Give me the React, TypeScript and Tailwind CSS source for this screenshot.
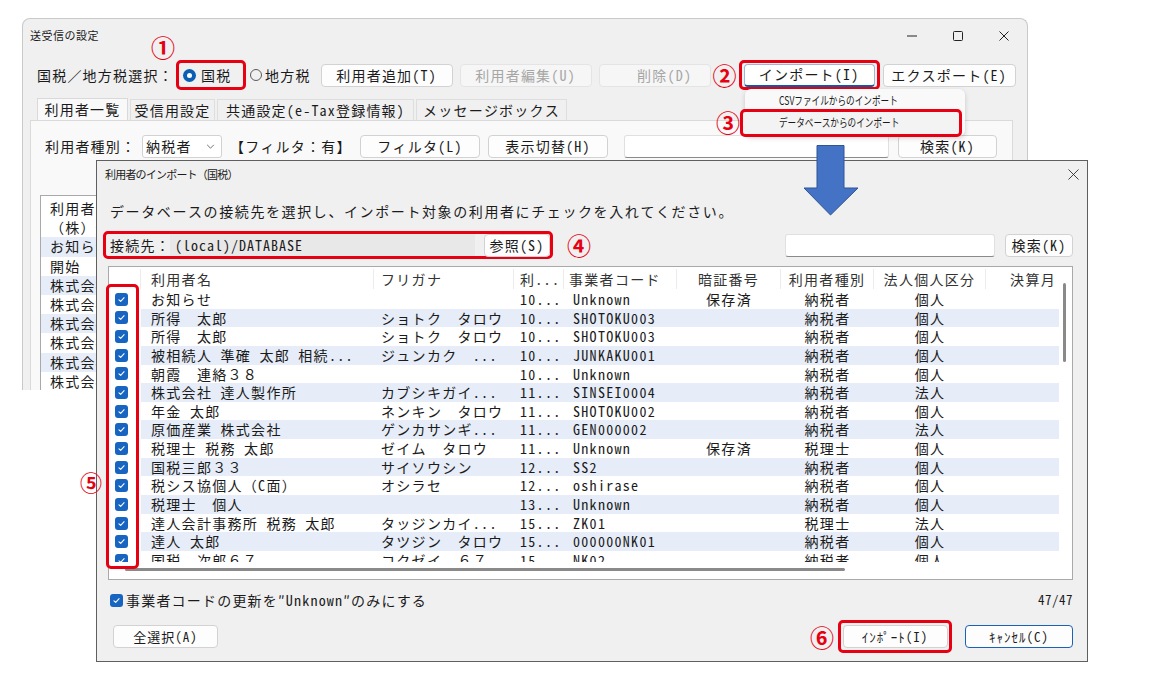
import React from 'react'

const rows: string[][] = [
  ['お知らせ', '', '10...', 'Unknown', '保存済', '納税者', '個人'],
  ['所得　太郎', 'ショトク　タロウ', '10...', 'SHOTOKU003', '', '納税者', '個人'],
  ['所得　太郎', 'ショトク　タロウ', '10...', 'SHOTOKU003', '', '納税者', '個人'],
  ['被相続人 準確 太郎 相続...', 'ジュンカク　...', '10...', 'JUNKAKU001', '', '納税者', '個人'],
  ['朝霞　連絡３８', '', '10...', 'Unknown', '', '納税者', '個人'],
  ['株式会社 達人製作所', 'カブシキガイ...', '11...', 'SINSEI0004', '', '納税者', '法人'],
  ['年金 太郎', 'ネンキン　タロウ', '11...', 'SHOTOKU002', '', '納税者', '個人'],
  ['原価産業 株式会社', 'ゲンカサンギ...', '11...', 'GEN000002', '', '納税者', '法人'],
  ['税理士 税務 太郎', 'ゼイム　タロウ', '11...', 'Unknown', '保存済', '税理士', '個人'],
  ['国税三郎３３', 'サイソウシン', '12...', 'SS2', '', '納税者', '個人'],
  ['税シス協個人（C面）', 'オシラセ', '12...', 'oshirase', '', '納税者', '個人'],
  ['税理士　個人', '', '13...', 'Unknown', '', '納税者', '個人'],
  ['達人会計事務所 税務 太郎', 'タッジンカイ...', '15...', 'ZK01', '', '税理士', '法人'],
  ['達人 太郎', 'タツジン　タロウ', '15...', '000000NK01', '', '納税者', '個人'],
  ['国税　次郎６７', 'コクゼイ　６７', '15...', 'NK02', '', '納税者', '個人'],
]

const listItems = ['利用者名', '（株）達人', 'お知らせ', '開始', '株式会社Ａ', '株式会社Ｂ', '株式会社Ｃ', '株式会社Ｄ', '株式会社Ｅ', '株式会社Ｆ']

function Btn({ children, className = '', disabled = false }: { children: React.ReactNode; className?: string; disabled?: boolean }) {
  return (
    <div
      className={`flex h-[23px] shrink-0 items-center justify-center whitespace-nowrap rounded-[4px] border ${
        disabled ? 'border-[#e4e4e4] bg-[#f6f6f6] text-[#a6a6a6]' : 'border-[#d2d2d2] bg-[#fdfdfd] text-[#1b1b1b]'
      } ${className}`}
    >
      {children}
    </div>
  )
}

function Check() {
  return (
    <span className="flex h-[13px] w-[13px] shrink-0 items-center justify-center rounded-[3px] bg-[#1765c1]">
      <svg viewBox="0 0 10 10" className="h-[9px] w-[9px]">
        <path d="M2.2 5.3 4.1 7.1 7.9 3" fill="none" stroke="white" strokeWidth="1.2" strokeLinecap="round" strokeLinejoin="round" />
      </svg>
    </span>
  )
}

export default function App() {
  return (
    <div className="relative h-[690px] w-[1157px] overflow-hidden bg-white font-['Noto_Sans_Mono_CJK_JP','Noto_Sans_CJK_JP',sans-serif] text-[14px] text-[#1b1b1b]">
      {/* main window */}
      <div className="absolute left-[22px] top-[18px] h-[372px] w-[1006px] overflow-hidden rounded-t-[8px] border border-b-0 border-[#c9c9c9] bg-[#f0f0f0] tracking-[1.2px]">
        <div className="flex h-[33px] items-center">
          <span className="pl-[7px] font-['Noto_Sans_CJK_JP',sans-serif] text-[11px] tracking-[0.5px]">送受信の設定</span>
          <div className="ml-auto flex h-full">
            <div className="flex w-[46px] items-center justify-center">
              <svg viewBox="0 0 10 10" className="h-[10px] w-[10px]"><path d="M0 5h10" stroke="#222" strokeWidth="1" /></svg>
            </div>
            <div className="flex w-[46px] items-center justify-center">
              <svg viewBox="0 0 10 10" className="h-[10px] w-[10px]"><rect x="0.5" y="0.5" width="9" height="9" rx="1" fill="none" stroke="#222" strokeWidth="1" /></svg>
            </div>
            <div className="flex w-[46px] items-center justify-center">
              <svg viewBox="0 0 10 10" className="h-[10px] w-[10px]"><path d="M0.5 0.5l9 9M9.5 0.5l-9 9" stroke="#222" strokeWidth="1" /></svg>
            </div>
          </div>
        </div>

        <div className="mt-[8px] flex h-[30px] items-center pl-[14px]">
          <span className="w-[139px] shrink-0 whitespace-nowrap">国税／地方税選択：</span>
          <div className="flex h-[30px] w-[70px] shrink-0 items-center rounded-[5px] border-[3px] border-[#e60012] pl-[4px]">
            <span className="flex h-[13px] w-[13px] items-center justify-center rounded-full bg-[#0a5fb4]">
              <span className="h-[5px] w-[5px] rounded-full bg-white" />
            </span>
            <span className="ml-[5px]">国税</span>
          </div>
          <div className="ml-[4px] flex shrink-0 items-center">
            <span className="h-[12px] w-[12px] rounded-full border border-[#5a5a5a]" />
            <span className="ml-[3px]">地方税</span>
          </div>
          <Btn className="ml-[10px] w-[132px]">利用者追加(T)</Btn>
          <Btn className="ml-[7px] w-[132px]" disabled>利用者編集(U)</Btn>
          <Btn className="ml-[7px] w-[112px] pl-[20px]" disabled>削除(D)</Btn>
          <span className="ml-[2px] w-[26px] shrink-0 font-['Noto_Sans_CJK_JP',sans-serif] text-[24px] font-bold leading-none tracking-normal text-[#e60012]">②</span>
          <div className="flex h-[30px] w-[141px] shrink-0 items-center justify-center rounded-[5px] border-[3px] border-[#e60012]">
            <div className="flex h-[23px] w-[131px] items-center justify-center whitespace-nowrap rounded-[4px] border border-[#9bb6d8] border-b-2 border-b-[#0f5aa8] bg-white">
              インポート(I)
            </div>
          </div>
          <Btn className="ml-[3px] w-[133px]">エクスポート(E)</Btn>
        </div>

        <div className="mt-[8px] flex h-[22px] items-end pl-[14px]">
          <div className="flex h-[22px] w-[91px] items-center justify-center border border-b-0 border-[#d9d9d9] bg-[#f9f9f9]">利用者一覧</div>
          <div className="ml-[2px] flex h-[21px] w-[85px] items-center justify-center border border-b-0 border-[#dedede]">受信用設定</div>
          <div className="ml-[2px] flex h-[21px] w-[197px] items-center justify-center whitespace-nowrap border border-b-0 border-[#dedede]">共通設定(e-Tax登録情報)</div>
          <div className="ml-[2px] flex h-[21px] w-[151px] items-center justify-center whitespace-nowrap border border-b-0 border-[#dedede]">メッセージボックス</div>
        </div>

        <div className="ml-[7px] h-[300px] w-[983px] border border-[#dadada] bg-[#f9f9f9]">
          <div className="mt-[14px] flex h-[23px] items-center pl-[14px]">
            <span className="w-[97px] shrink-0 whitespace-nowrap">利用者種別：</span>
            <div className="flex h-[23px] w-[80px] shrink-0 items-center justify-between rounded-[3px] border border-[#d2d2d2] bg-white pl-[3px] pr-[6px]">
              <span>納税者</span>
              <svg viewBox="0 0 10 6" className="h-[5px] w-[9px]"><path d="M1 1l4 4 4-4" fill="none" stroke="#555" strokeWidth="1" /></svg>
            </div>
            <span className="ml-[8px] w-[120px] shrink-0 whitespace-nowrap">【フィルタ：有】</span>
            <Btn className="ml-[10px] w-[120px]">フィルタ(L)</Btn>
            <Btn className="ml-[8px] w-[120px]">表示切替(H)</Btn>
            <div className="ml-[16px] h-[23px] w-[265px] shrink-0 rounded-[3px] border border-[#e0e0e0] border-b-[#8a8a8a] bg-white" />
            <Btn className="ml-[9px] w-[99px]">検索(K)</Btn>
          </div>
          <div className="ml-[9px] mt-[37px] h-[220px] w-[200px] border border-[#a9a9a9] bg-white pt-[3px]">
            {listItems.map((t, i) => (
              <div
                key={i}
                className={`h-[19.2px] whitespace-nowrap pl-[9px] leading-[19.2px] ${i >= 2 && i % 2 === 0 ? 'bg-[#e6edf8]' : ''}`}
              >
                {t}
              </div>
            ))}
          </div>
        </div>
      </div>

      {/* dropdown menu */}
      <div className="absolute left-[745px] top-[89px] h-[47px] w-[220px] rounded-[6px] bg-[#f9f9f9] font-['Noto_Sans_CJK_JP',sans-serif] text-[11.5px] shadow-[0_2px_5px_rgba(0,0,0,0.18)]">
        <div className="flex h-[23px] items-center pl-[34px]">
          <span className="inline-block origin-left scale-x-[0.75] whitespace-nowrap">CSVファイルからのインポート</span>
        </div>
      </div>
      <div className="absolute left-[740px] top-[109px] flex h-[28px] w-[222px] items-center rounded-[5px] border-[3px] border-[#e60012] bg-[#f3f3f3] pl-[36px] font-['Noto_Sans_CJK_JP',sans-serif] text-[11.5px]">
        <span className="inline-block origin-left scale-x-[0.75] whitespace-nowrap">データベースからのインポート</span>
      </div>

      {/* dialog */}
      <div className="absolute left-[96px] top-[160px] flex h-[502px] w-[992px] flex-col border border-[#5f5f5f] bg-[#f0f0f0]">
        <div className="flex h-[27px] items-center justify-between">
          <span className="pl-[8px] font-['Noto_Sans_CJK_JP',sans-serif] text-[11px] tracking-[-0.8px]">利用者のインポート（国税）</span>
          <svg viewBox="0 0 12 12" className="mr-[8px] h-[11px] w-[11px]"><path d="M0.5 0.5l11 11M11.5 0.5l-11 11" stroke="#333" strokeWidth="1" /></svg>
        </div>

        <div className="mt-[14px] h-[18px] whitespace-nowrap pl-[13px] leading-[18px] tracking-[1.6px]">
          データベースの接続先を選択し、インポート対象の利用者にチェックを入れてください。
        </div>

        <div className="mt-[11px] flex h-[28px] items-center pl-[6px] pr-[14px] tracking-[1.2px]">
          <div className="flex h-[28px] w-[450px] shrink-0 items-center rounded-[5px] border-[3px] border-[#e60012] pl-[4px]">
            <span className="w-[60px] shrink-0 whitespace-nowrap">接続先：</span>
            <div className="flex h-[22px] w-[305px] shrink-0 items-center bg-[#e8e8e8] pl-[5px] tracking-[1px]">(local)/DATABASE</div>
            <Btn className="ml-[9px] w-[66px]">参照(S)</Btn>
          </div>
          <span className="ml-[14px] font-['Noto_Sans_CJK_JP',sans-serif] text-[24px] font-bold leading-none tracking-normal text-[#e60012]">④</span>
          <div className="ml-auto h-[23px] w-[210px] shrink-0 rounded-[3px] border border-[#e0e0e0] border-b-[#8a8a8a] bg-white" />
          <Btn className="ml-[10px] w-[68px]">検索(K)</Btn>
        </div>

        <div className="ml-[11px] mt-[7px] flex h-[314px] w-[965px] flex-col border border-[#a9a9a9] bg-white tracking-[1.3px]">
          <div className="relative flex h-[295px]">
            <div className="w-[950px] overflow-hidden">
              <div className="grid h-[23px] grid-cols-[32px_233px_140px_50px_113px_104px_93px_112px_73px] items-center text-[#333]">
                <div className="h-[20px] border-r border-[#ececec]" />
                <div className="h-[20px] border-r border-[#ececec] pl-[10px] leading-[20px]">利用者名</div>
                <div className="h-[20px] border-r border-[#ececec] pl-[7px] leading-[20px]">フリガナ</div>
                <div className="h-[20px] border-r border-[#ececec] pl-[6px] leading-[20px]">利...</div>
                <div className="h-[20px] border-r border-[#ececec] pl-[5px] leading-[20px]">事業者コード</div>
                <div className="h-[20px] border-r border-[#ececec] text-center leading-[20px]">暗証番号</div>
                <div className="h-[20px] border-r border-[#ececec] text-center leading-[20px]">利用者種別</div>
                <div className="h-[20px] border-r border-[#ececec] text-center leading-[20px]">法人個人区分</div>
                <div className="h-[20px] pr-[3px] text-right leading-[20px]">決算月</div>
              </div>
              {rows.map((r, i) => (
                <div
                  key={i}
                  className={`grid h-[18.65px] grid-cols-[32px_233px_140px_50px_113px_104px_93px_112px_73px] leading-[18.65px] ${
                    i % 2 === 1 ? 'bg-[#e6edf8]' : 'bg-white'
                  }`}
                >
                  <div className="flex h-full items-center bg-white pl-[6px]">
                    <Check />
                  </div>
                  <div className="whitespace-nowrap pl-[10px]">{r[0]}</div>
                  <div className="whitespace-nowrap pl-[7px]">{r[1]}</div>
                  <div className="whitespace-nowrap pl-[6px]">{r[2]}</div>
                  <div className="whitespace-nowrap pl-[9px]">{r[3]}</div>
                  <div className="whitespace-nowrap text-center">{r[4]}</div>
                  <div className="whitespace-nowrap text-center">{r[5]}</div>
                  <div className="whitespace-nowrap text-center">{r[6]}</div>
                  <div />
                </div>
              ))}
            </div>
            <div className="w-[13px]">
              <div className="ml-[4px] mt-[16px] h-[79px] w-[3px] rounded-full bg-[#8a8a8a]" />
            </div>
            <div className="absolute left-[-3px] top-[17px] h-[285px] w-[33px] rounded-[5px] border-[3px] border-[#e60012]" />
          </div>
          <div className="flex h-[17px] items-start pt-[6px]">
            <div className="ml-[16px] h-[3px] w-[720px] rounded-full bg-[#8a8a8a]" />
          </div>
        </div>

        <div className="mt-[11px] flex h-[18px] items-center pl-[13px] pr-[14px]">
          <Check />
          <span className="ml-[3px] whitespace-nowrap tracking-[1.2px]">事業者コードの更新を″Unknown″のみにする</span>
          <span className="ml-auto text-[13px] tracking-[0.5px]">47/47</span>
        </div>

        <div className="mt-[11px] flex h-[33px] items-center pl-[16px] pr-[14px] text-[13px] tracking-[1px]">
          <Btn className="w-[105px]">全選択(A)</Btn>
          <span className="ml-auto w-[25px] font-['Noto_Sans_CJK_JP',sans-serif] text-[24px] font-bold leading-none tracking-normal text-[#e60012]">⑥</span>
          <div className="ml-[3px] flex h-[33px] w-[114px] items-center justify-center rounded-[5px] border-[3px] border-[#e60012]">
            <Btn className="w-[105px]">ｲﾝﾎﾟｰﾄ(I)</Btn>
          </div>
          <div className="ml-[13px] flex h-[23px] w-[108px] items-center justify-center whitespace-nowrap rounded-[4px] border-[1.5px] border-[#1a62b8] bg-[#fdfdfd]">
            ｷｬﾝｾﾙ(C)
          </div>
        </div>
      </div>

      {/* annotations */}
      <span className="absolute left-[151px] top-[35px] font-['Noto_Sans_CJK_JP',sans-serif] text-[24px] font-bold leading-none text-[#e60012]">①</span>
      <span className="absolute left-[716px] top-[110px] font-['Noto_Sans_CJK_JP',sans-serif] text-[24px] font-bold leading-none text-[#e60012]">③</span>
      <span className="absolute left-[80px] top-[470px] font-['Noto_Sans_CJK_JP',sans-serif] text-[22px] font-bold leading-none text-[#e60012]">⑤</span>
      <svg viewBox="0 0 56 71" className="absolute left-[803px] top-[145px] h-[71px] w-[56px]">
        <path d="M14 0.5H41V43H55L27.5 70L1 43H14Z" fill="#4472c4" stroke="#2f5597" strokeWidth="1" />
      </svg>
    </div>
  )
}
